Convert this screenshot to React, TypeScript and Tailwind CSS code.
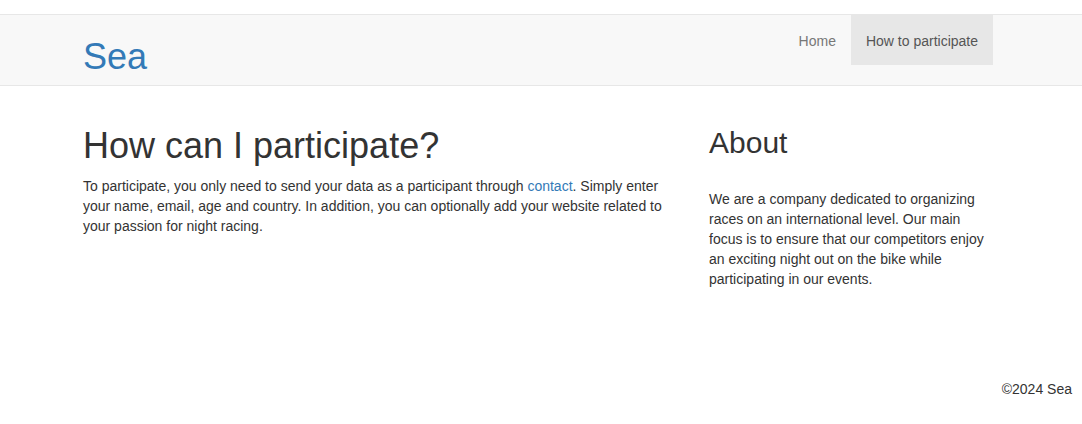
import React from 'react';

const font = { fontFamily: '"Liberation Sans", Arial, sans-serif' };

const NavBar: React.FC = () => (
  <nav className="mt-[14px] bg-[#f8f8f8] border-y border-[#e7e7e7] h-[72px]">
    <div className="w-[940px] mx-auto pl-[12px] pr-[18px] flex justify-between items-start">
      <a href="#" className="block pt-[22px] text-[36px] leading-[40px] text-[#337ab7] no-underline">
        Sea
      </a>
      <ul className="flex text-[14px] leading-[20px]">
        <li>
          <a href="#" className="block px-[15px] pt-[16px] pb-[14px] text-[#777]">Home</a>
        </li>
        <li>
          <a href="#" className="block px-[15px] pt-[16px] pb-[14px] text-[#555] bg-[#e7e7e7]">
            How to participate
          </a>
        </li>
      </ul>
    </div>
  </nav>
);

export default function App() {
  return (
    <div className="min-h-[424px] bg-white text-[#333] text-[14px] leading-[20px]" style={font}>
      <NavBar />
      <main className="w-[940px] mx-auto pl-[12px] pr-[18px] mt-[20px] flex">
        <section className="w-[596px]">
          <h1 className="mt-[20px] mb-[10px] text-[36px] leading-[39.6px] font-normal">
            How can I participate?
          </h1>
          <p>
            To participate, you only need to send your data as a participant through{' '}
            <a href="#" className="text-[#337ab7]">contact</a>. Simply enter your name, email, age and
            country. In addition, you can optionally add your website related to your passion for night
            racing.
          </p>
        </section>
        <aside className="w-[284px] ml-auto">
          <h2 className="mt-[20px] text-[30px] leading-[33px] font-normal">About</h2>
          <p className="mt-[30px] mb-[10px]">
            We are a company dedicated to organizing races on an international level. Our main focus is to
            ensure that our competitors enjoy an exciting night out on the bike while participating in our
            events.
          </p>
        </aside>
      </main>
      <footer className="mt-[80px] pr-[10px] text-right">©2024 Sea</footer>
    </div>
  );
}
